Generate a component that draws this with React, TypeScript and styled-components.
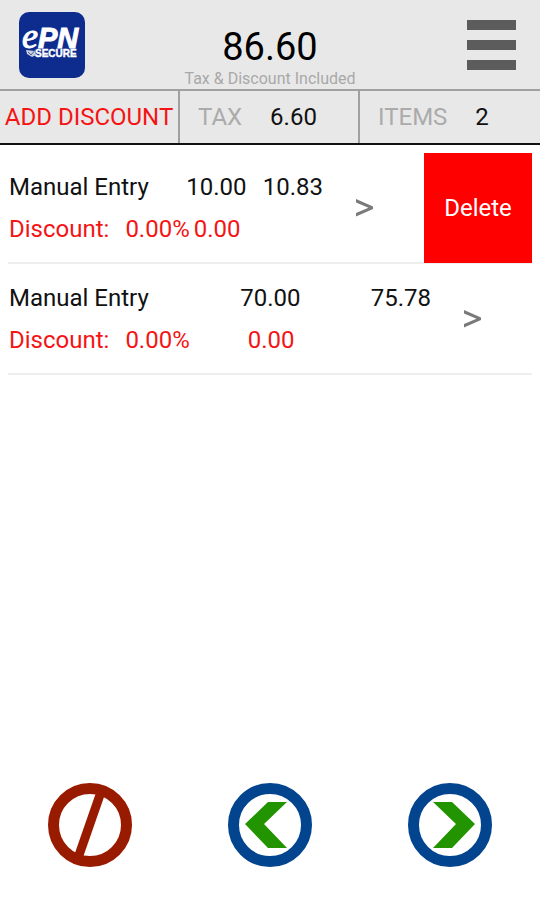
import React from "react";
import styled, { createGlobalStyle } from "styled-components";

const GlobalStyle = createGlobalStyle`
  * { box-sizing: border-box; }
  body { margin: 0; background: #fff; font-family: Roboto, "Liberation Sans", sans-serif; }
  button { margin: 0; padding: 0; border: 0; background: none; font: inherit; cursor: pointer; }
`;

const Page = styled.div`
  display: flex;
  flex-direction: column;
  min-height: 100vh;
  font-size: 24px;
  line-height: 28px;
  color: #111;
  white-space: nowrap;
`;

const Header = styled.header`
  display: grid;
  grid-template-columns: 1fr auto 1fr;
  align-items: center;
  height: 89px;
  padding: 0 18px;
  background: #e8e8e8;
`;

const Logo = styled.svg`
  display: block;
  width: 68px;
  height: 68px;
`;

const Total = styled.div`
  display: flex;
  flex-direction: column;
  align-items: center;
  align-self: end;
`;

const Amount = styled.h1`
  margin: 0;
  font-size: 38px;
  font-weight: 400;
  line-height: 44px;
  color: #000;
`;

const Note = styled.span`
  font-size: 16px;
  line-height: 20px;
  color: #a8a8a8;
`;

const MenuButton = styled.button`
  display: flex;
  flex-direction: column;
  justify-self: end;
  gap: 10px;
  width: 49px;
  margin-right: 6px;
`;

const MenuBar = styled.span`
  height: 10px;
  background: #5c5c5c;
`;

const Summary = styled.div`
  display: grid;
  grid-template-columns: repeat(3, 1fr);
  height: 56px;
  border-top: 2px solid #a0a0a0;
  border-bottom: 2px solid #111;
  background: #e8e8e8;
`;

const DiscountButton = styled.button`
  border-right: 2px solid #a0a0a0;
  color: #f41414;
`;

const SummaryCell = styled.div<{ $divided?: boolean }>`
  display: flex;
  align-items: center;
  gap: 28px;
  padding-left: 18px;
  border-right: ${(p) => (p.$divided ? "2px solid #a0a0a0" : "0")};
`;

const SummaryLabel = styled.span`
  color: #ababab;
`;

const List = styled.ul`
  margin: 0;
  padding: 8px 8px 0;
  list-style: none;
`;

const Item = styled.li`
  display: flex;
  height: 111px;
  border-bottom: 2px solid #eee;
`;

const ItemBody = styled.div`
  display: flex;
  flex: 1;
  align-items: center;
  padding-left: 1px;
`;

const Lines = styled.div`
  flex: 1;
  display: flex;
  flex-direction: column;
  gap: 14px;
`;

const Line = styled.div<{ $red?: boolean }>`
  display: grid;
  grid-template-columns: 161px 1fr 1fr;
  color: ${(p) => (p.$red ? "#f41414" : "#111")};
`;

const Value = styled.span<{ $inset?: boolean }>`
  text-align: right;
  padding-right: ${(p) => (p.$inset ? "6px" : "0")};
`;

const DiscountLabel = styled.span`
  display: flex;
  gap: 16px;
`;

const OpenButton = styled.button`
  width: 101px;
  padding-left: 32px;
  text-align: left;

  svg { display: block; }
`;

const DeleteButton = styled.button`
  width: 108px;
  margin-bottom: -1px;
  background: #f00;
  color: #fff;
`;

const Footer = styled.nav`
  display: grid;
  grid-template-columns: repeat(3, 1fr);
  justify-items: center;
  margin-top: auto;
  padding-bottom: 33px;
`;

const RoundButton = styled.button`
  width: 84px;
  height: 84px;
  border-radius: 50%;

  svg { display: block; }
`;

type Entry = {
  name: string;
  price: string;
  total: string;
  rate: string;
  discount: string;
  deletable?: boolean;
};

const entries: Entry[] = [
  { name: "Manual Entry", price: "10.00", total: "10.83", rate: "0.00%", discount: "0.00", deletable: true },
  { name: "Manual Entry", price: "70.00", total: "75.78", rate: "0.00%", discount: "0.00" },
];

function EntryRow({ entry }: { entry: Entry }) {
  return (
    <Item>
      <ItemBody>
        <Lines>
          <Line>
            <span>{entry.name}</span>
            <Value>{entry.price}</Value>
            <Value>{entry.total}</Value>
          </Line>
          <Line $red>
            <DiscountLabel>
              <span>Discount:</span>
              <span>{entry.rate}</span>
            </DiscountLabel>
            <Value $inset>{entry.discount}</Value>
          </Line>
        </Lines>
        <OpenButton type="button" aria-label="Open entry">
          <svg width="20" height="20" viewBox="0 0 20 20" fill="#7a7a7a">
            <path d="M1 1 L18 8.5 V11 L1 18.5 V15 L13.5 9.8 L1 4.5 Z" />
          </svg>
        </OpenButton>
      </ItemBody>
      {entry.deletable && <DeleteButton type="button">Delete</DeleteButton>}
    </Item>
  );
}

export default function App() {
  return (
    <Page>
      <GlobalStyle />
      <Header>
        <Logo viewBox="0 0 68 68" role="img" aria-label="ePN Secure">
          <rect x="1" y="1" width="66" height="66" rx="10" fill="#0d2c8e" />
          <g fill="#fff">
            <text x="4" y="37" fontFamily="Liberation Serif, serif" fontStyle="italic" fontSize="36" stroke="#fff" strokeWidth="1">e</text>
            <text x="20" y="37" fontFamily="Liberation Sans, sans-serif" fontStyle="italic" fontWeight="700" fontSize="29" stroke="#fff" strokeWidth="1">PN</text>
            <text x="17" y="46" fontFamily="Liberation Sans, sans-serif" fontWeight="700" fontSize="10" stroke="#fff" strokeWidth="0.4">SECURE</text>
          </g>
          <path d="M8 39 L17 40 L18 44 L14 46 L9 43 Z" fill="#c9cee0" />
          <path d="M10 41 L13 44 L18 38" fill="none" stroke="#56648f" strokeWidth="1" />
        </Logo>
        <Total>
          <Amount>86.60</Amount>
          <Note>Tax &amp; Discount Included</Note>
        </Total>
        <MenuButton type="button" aria-label="Menu">
          <MenuBar />
          <MenuBar />
          <MenuBar />
        </MenuButton>
      </Header>
      <Summary>
        <DiscountButton type="button">ADD DISCOUNT</DiscountButton>
        <SummaryCell $divided>
          <SummaryLabel>TAX</SummaryLabel>
          <span>6.60</span>
        </SummaryCell>
        <SummaryCell>
          <SummaryLabel>ITEMS</SummaryLabel>
          <span>2</span>
        </SummaryCell>
      </Summary>
      <List>
        {entries.map((entry, i) => (
          <EntryRow key={i} entry={entry} />
        ))}
      </List>
      <Footer>
        <RoundButton type="button" aria-label="Cancel">
          <svg width="84" height="84" viewBox="0 0 84 84" fill="none" stroke="#981b00">
            <circle cx="42" cy="42" r="36.5" strokeWidth="11" />
            <path d="M53 9 L30 75" strokeWidth="9" />
          </svg>
        </RoundButton>
        <RoundButton type="button" aria-label="Back">
          <svg width="84" height="84" viewBox="0 0 84 84">
            <circle cx="42" cy="42" r="36.5" fill="none" stroke="#03448f" strokeWidth="11" />
            <path d="M40 19 H59 L36 41 L59 65 H40 L17 41 Z" fill="#229400" />
          </svg>
        </RoundButton>
        <RoundButton type="button" aria-label="Next">
          <svg width="84" height="84" viewBox="0 0 84 84">
            <circle cx="42" cy="42" r="36.5" fill="none" stroke="#03448f" strokeWidth="11" />
            <path d="M25 19 H44 L67 41 L44 65 H25 L48 41 Z" fill="#229400" />
          </svg>
        </RoundButton>
      </Footer>
    </Page>
  );
}
